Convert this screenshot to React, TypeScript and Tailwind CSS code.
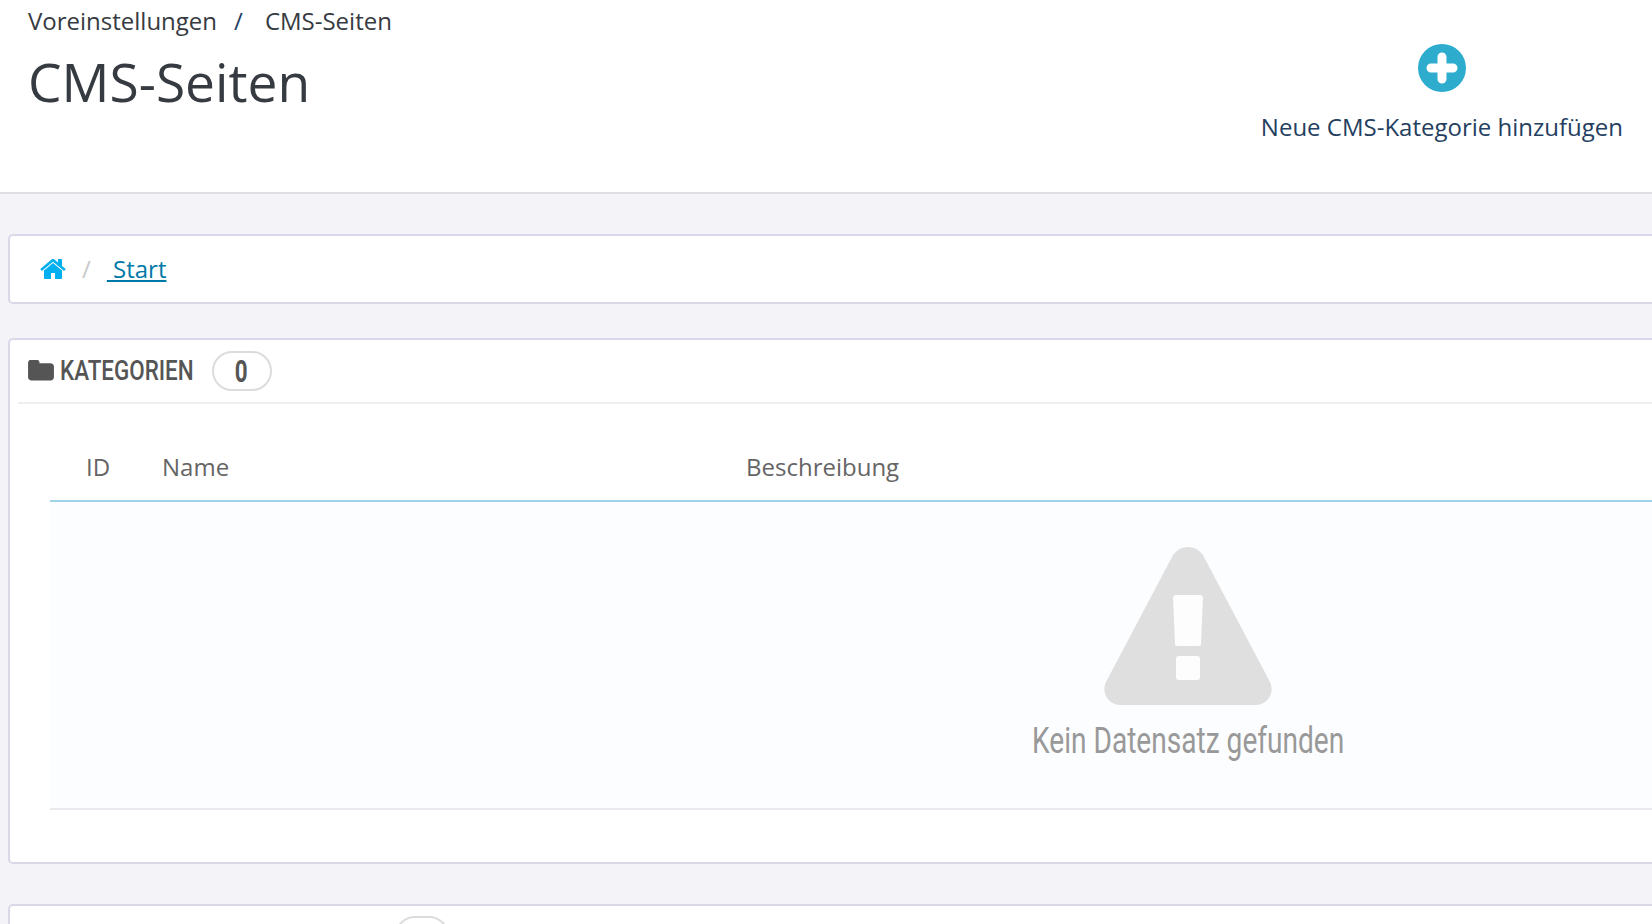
const HomeIcon = () => (
  <svg viewBox="0 0 1792 1792" className="w-[28px] h-[28px] fill-[#00aff0]">
    <path d="M1472 992v480q0 26-19 45t-45 19h-384v-384h-256v384h-384q-26 0-45-19t-19-45v-480q0-1 .5-3t.5-3l575-474 575 474q1 2 1 6zm223-69l-62 74q-8 9-21 11h-3q-13 0-21-7l-692-577-692 577q-12 8-24 7-13-2-21-11l-62-74q-8-10-7-23.5t11-21.5l719-599q32-26 76-26t76 26l244 204v-195q0-14 9-23t23-9h192q14 0 23 9t9 23v408l219 182q10 8 11 21.5t-7 23.5z" />
  </svg>
);

const FolderIcon = () => (
  <svg viewBox="0 0 1728 1536" className="w-[26px] h-[23px] fill-[#555555]">
    <path d="M1728 448v704q0 92-66 158t-158 66h-1280q-92 0-158-66t-66-158v-960q0-92 66-158t158-66h320q92 0 158 66t66 158v32h736q92 0 158 66t66 158z" />
  </svg>
);

const PlusIcon = () => (
  <svg viewBox="0 0 48 48" className="w-12 h-12">
    <circle cx="24" cy="24" r="24" fill="#2eacce" />
    <path d="M24 13v22M13 24h22" stroke="#ffffff" strokeWidth="9" strokeLinecap="round" />
  </svg>
);

const WarningIcon = () => (
  <svg viewBox="0 0 170 158" className="w-[170px] h-[158px]">
    <path
      d="M85 0c7 0 13 4 16 10l66 125c5 10-2 23-15 23H18C5 158-2 145 3 135L69 10C72 4 78 0 85 0z"
      fill="#dfdfdf"
    />
    <path d="M72 48h26l2 2-2 47q0 2-2 2H74q-2 0-2-2l-2-47z" fill="#fdfdfe" />
    <rect x="73" y="109" width="24" height="24" rx="3" fill="#fdfdfe" />
  </svg>
);

export default function App() {
  return (
    <div className="h-[924px] overflow-hidden bg-[#f3f3f8] font-['Open_Sans',sans-serif]">
      <header className="h-[194px] bg-white border-b-2 border-[#dfdfe3] flex justify-between pl-7 pr-[29px]">
        <div>
          <nav className="flex items-center pt-[4px] text-[24px] leading-[33px] text-[#363a41]">
            <span>Voreinstellungen</span>
            <span className="ml-[17px] text-[#25405f]">/</span>
            <span className="ml-[22px]">CMS-Seiten</span>
          </nav>
          <h1 className="text-[53.3px] leading-[76px] text-[#363a41] mt-[7px]">CMS-Seiten</h1>
        </div>
        <a className="flex flex-col items-center pt-11 text-[24px] leading-[33px] text-[#25405f]">
          <PlusIcon />
          <span className="mt-[18px]">Neue CMS-Kategorie hinzufügen</span>
        </a>
      </header>

      <main className="w-[2370px] pl-2 pt-10">
        <div className="h-[70px] bg-white border-2 border-[#d9d8e8] rounded-[5px] flex items-center pl-[29px]">
          <HomeIcon />
          <span className="ml-[15px] text-[24px] text-[#c8c8c8]">/</span>
          <a className="ml-[16px] text-[24px] text-[#0079a8] underline whitespace-pre"> Start</a>
        </div>

        <section className="mt-[34px] h-[526px] bg-white border-2 border-[#d9d8e8] rounded-[5px] pl-2">
          <div className="h-[64px] border-b-2 border-[#eeeeee] flex items-center pl-[10px]">
            <FolderIcon />
            <span className="ml-[6px] w-[134px] text-[28px] font-medium text-[#555555] font-['Roboto',sans-serif] origin-left scale-x-[0.8] whitespace-nowrap">
              KATEGORIEN
            </span>
            <span className="ml-[18px] w-[60px] h-[40px] border-2 border-[#dcdcdc] rounded-full flex items-center justify-center text-[32px] font-bold text-[#555555] font-['Roboto',sans-serif]">
              <span className="scale-x-[0.7] -ml-[2px]">0</span>
            </span>
          </div>
          <div className="ml-[32px] mt-[32px] w-[2276px]">
            <div className="h-[66px] border-b-2 border-[#a0d2e8] flex items-center text-[24px] text-[#656565] pb-[2px]">
              <span className="ml-9 w-[76px]">ID</span>
              <span className="w-[584px]">Name</span>
              <span>Beschreibung</span>
            </div>
            <div className="h-[308px] bg-[#fcfdfe] border-b-2 border-[#eaeaee] flex flex-col items-center pt-[45px]">
              <WarningIcon />
              <span className="mt-[12px] text-[36px] leading-[48px] text-[#999999] font-['Roboto',sans-serif] scale-x-[0.78] whitespace-nowrap">
                Kein Datensatz gefunden
              </span>
            </div>
          </div>
        </section>

        <section className="mt-[40px] h-[100px] bg-white border-2 border-[#d9d8e8] rounded-[5px] relative">
          <span className="absolute left-[385px] top-[10px] w-[54px] h-[40px] border-2 border-[#dcdcdc] rounded-full" />
        </section>
      </main>
    </div>
  );
}
